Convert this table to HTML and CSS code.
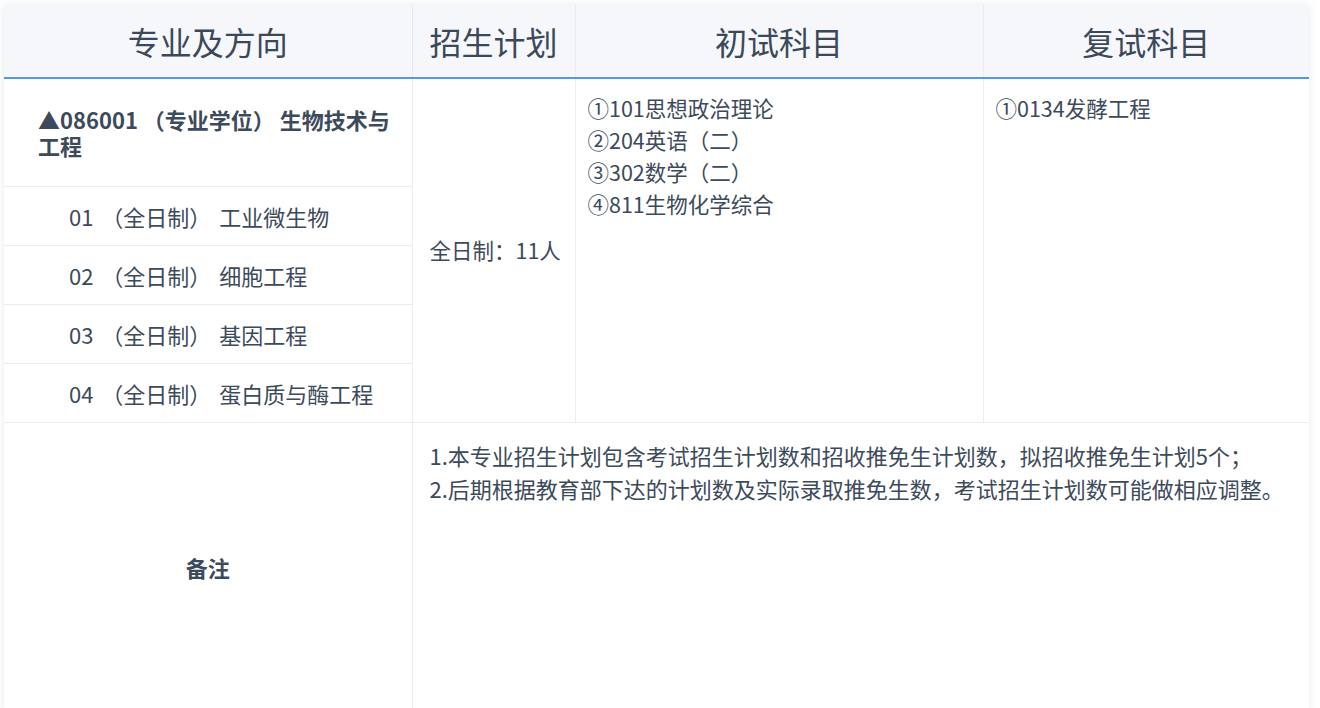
FILE: index.html
```html
<!DOCTYPE html>
<html lang="zh-CN">
<head>
<meta charset="utf-8">
<title>招生专业目录</title>
<link rel="stylesheet" href="styles.css">
</head>
<body>
<div class="wrap">
<table class="plan">
  <colgroup>
    <col class="c1"><col class="c2"><col class="c3"><col class="c4">
  </colgroup>
  <thead>
    <tr>
      <th>专业及方向</th>
      <th>招生计划</th>
      <th>初试科目</th>
      <th>复试科目</th>
    </tr>
  </thead>
  <tbody>
    <tr class="major-row">
      <td class="major">▲086001 （专业学位） 生物技术与工程</td>
      <td class="plan-num" rowspan="5">全日制：11人</td>
      <td class="subjects" rowspan="5">
        <div>①101思想政治理论</div>
        <div>②204英语（二）</div>
        <div>③302数学（二）</div>
        <div>④811生物化学综合</div>
      </td>
      <td class="subjects" rowspan="5">
        <div>①0134发酵工程</div>
      </td>
    </tr>
    <tr class="dir-row"><td class="dir">01 （全日制） 工业微生物</td></tr>
    <tr class="dir-row"><td class="dir">02 （全日制） 细胞工程</td></tr>
    <tr class="dir-row"><td class="dir">03 （全日制） 基因工程</td></tr>
    <tr class="dir-row"><td class="dir">04 （全日制） 蛋白质与酶工程</td></tr>
    <tr class="note-row">
      <td class="note-label">备注</td>
      <td class="note" colspan="3">
        <div>1.本专业招生计划包含考试招生计划数和招收推免生计划数，拟招收推免生计划5个；</div>
        <div>2.后期根据教育部下达的计划数及实际录取推免生数，考试招生计划数可能做相应调整。</div>
      </td>
    </tr>
  </tbody>
</table>
</div>
</body>
</html>
```

FILE: styles.css
```css
html, body {
  margin: 0;
  padding: 0;
  background: #ffffff;
}

body {
  font-family: "Noto Sans CJK SC", "Noto Sans", sans-serif;
  color: #3d4a5b;
}

.wrap {
  padding: 5px 11px 0 4px;
}

.plan {
  width: 1305px;
  border-collapse: collapse;
  table-layout: fixed;
  background: #ffffff;
  box-shadow: 0 0 8px rgba(60, 80, 110, 0.12);
}

.c1 { width: 408px; }
.c2 { width: 163px; }
.c3 { width: 408px; }
.c4 { width: 326px; }

.plan th {
  height: 72px;
  padding: 0;
  background: #f5f7fb;
  font-size: 32px;
  font-weight: 400;
  color: #3b4859;
  text-align: center;
  vertical-align: middle;
  border-left: 1px solid #e6ebf1;
  border-bottom: 2px solid #4c9fdc;
  line-height: 40px;
}

.plan th:first-child { border-left: none; }

.plan td {
  border: 1px solid #e8edf2;
  font-size: 21.5px;
  line-height: 32px;
  padding: 0;
  vertical-align: middle;
}

.plan td:first-child { border-left: none; }
.plan tr > td:last-child { border-right: none; }

.major-row { height: 108px; }

.plan .major {
  font-weight: 700;
  font-size: 22px;
  line-height: 26px;
  padding: 0 16px 0 34px;
}

.dir-row { height: 59px; }

.plan .dir {
  font-size: 22px;
  word-spacing: 3px;
  padding-left: 65px;
}

.plan .plan-num {
  padding: 0 10px 0 17px;
}

.plan .subjects {
  vertical-align: top;
  padding: 13px 12px;
}

.note-row { height: 290px; }

.plan .note-label {
  text-align: center;
  font-weight: 700;
  font-size: 22px;
}

.plan .note {
  vertical-align: top;
  padding: 16px 16px 0 17px;
  font-size: 22px;
  line-height: 33px;
}
```
